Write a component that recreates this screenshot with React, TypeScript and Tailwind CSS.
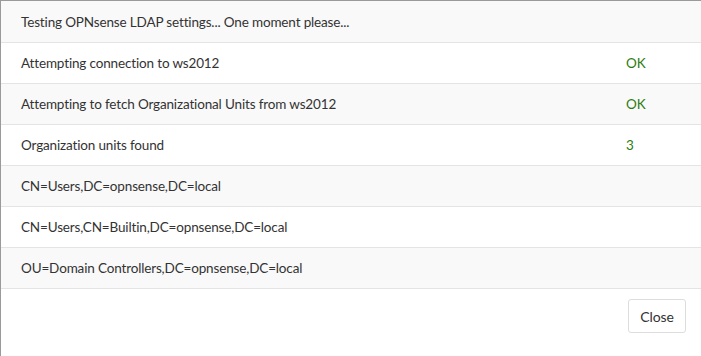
import React from "react";

const rows: { label: string; value?: string }[] = [
  { label: "Testing OPNsense LDAP settings... One moment please..." },
  { label: "Attempting connection to ws2012", value: "OK" },
  { label: "Attempting to fetch Organizational Units from ws2012", value: "OK" },
  { label: "Organization units found", value: "3" },
  { label: "CN=Users,DC=opnsense,DC=local" },
  { label: "CN=Users,CN=Builtin,DC=opnsense,DC=local" },
  { label: "OU=Domain Controllers,DC=opnsense,DC=local" },
];

export default function App() {
  return (
    <div
      className="w-[701px] h-[356px] bg-white border-l border-t border-[#9a9a9a] text-[13.5px] tracking-[-0.15px] text-[#333333] overflow-hidden"
      style={{ fontFamily: "Lato, 'Open Sans', sans-serif" }}
    >
      <div className="flex flex-col bg-[#f9f9f9] pt-[1px]">
        {rows.map((r, i) => (
          <div
            key={i}
            className={
              "flex items-center h-[41px] border-b border-[#e4e4e4] " +
              (i % 2 === 0 ? "bg-[#f9f9f9]" : "bg-white")
            }
          >
            <div className="flex-1 pl-[20px]">{r.label}</div>
            <div className="w-[75px] text-[#2d7d10]">{r.value ?? ""}</div>
          </div>
        ))}
      </div>
      <div className="flex justify-end pt-[10px] pr-[15px]">
        <button className="h-[34px] w-[58px] rounded-[3px] border border-[#dddddd] bg-white text-[#333333] text-[14px]">
          Close
        </button>
      </div>
    </div>
  );
}
